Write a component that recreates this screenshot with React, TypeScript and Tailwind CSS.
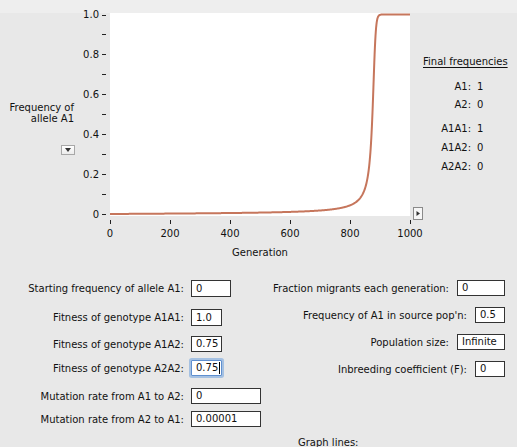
import React, { useMemo } from 'react';

// one-locus selection + mutation model, run for 1000 generations
const simulate = (w11: number, w12: number, w22: number, u: number, v: number, gens: number) => {
  let p = 0;
  const out: number[] = [];
  for (let g = 0; g <= gens; g++) {
    out.push(p);
    const q = 1 - p;
    const wbar = p * p * w11 + 2 * p * q * w12 + q * q * w22;
    let ps = (p * p * w11 + p * q * w12) / wbar;
    ps = ps + v * (1 - ps) - u * ps;
    p = ps;
  }
  return out;
};

const X = (g: number) => 32 + 0.3 * g;
const Y = (f: number) => 214 - 199.5 * f;

const Chart: React.FC = () => {
  const pts = useMemo(() => {
    const data = simulate(1, 0.75, 0.75, 0, 0.00001, 1000);
    return data.map((f, g) => `${X(g).toFixed(2)},${Y(f).toFixed(2)}`).join(' ');
  }, []);

  const yTicks = [0, 0.1, 0.2, 0.3, 0.4, 0.5, 0.6, 0.7, 0.8, 0.9, 1];
  const yLabels: Record<string, string> = { '0': '0', '0.2': '0.2', '0.4': '0.4', '0.6': '0.6', '0.8': '0.8', '1': '1.0' };
  const xTicks = [0, 200, 400, 600, 800, 1000];

  return (
    <svg width={345} height={262} className="shrink-0" fontFamily="'DejaVu Sans', sans-serif" fontSize={10}>
      <rect x={32} y={13} width={300} height={203} fill="#ffffff" />
      {yTicks.map(t => {
        const key = String(Math.round(t * 10) / 10);
        return (
          <g key={key}>
            <line x1={24} x2={28} y1={Math.round(Y(t)) + 0.5} y2={Math.round(Y(t)) + 0.5} stroke="#222" strokeWidth={1} />
            {yLabels[key] && (
              <text x={21} y={Y(t) + 3.5} textAnchor="end" fill="#111">{yLabels[key]}</text>
            )}
          </g>
        );
      })}
      {xTicks.map(t => (
        <g key={t}>
          <line x1={Math.round(X(t)) + 0.5} x2={Math.round(X(t)) + 0.5} y1={220} y2={224} stroke="#222" strokeWidth={1} />
          <text x={X(t)} y={236.5} textAnchor="middle" fill="#111">{t}</text>
        </g>
      ))}
      <text x={182} y={255.5} textAnchor="middle" fill="#111">Generation</text>
      <polyline points={pts} fill="none" stroke="#c6765c" strokeWidth={2} strokeLinejoin="round" />
      {/* scroll arrow */}
      <rect x={335.5} y={207.5} width={9} height={12} fill="#f6f6f6" stroke="#8a8a8a" />
      <path d="M338.5 211 L342 213.5 L338.5 216 Z" fill="#333" />
    </svg>
  );
};

const Field: React.FC<{ value: string; w: string; h?: string; focus?: boolean }> = ({ value, w, h = 'h-[16px]', focus }) => (
  <div
    className={`${w} ${h} shrink-0 bg-white flex items-center pl-[4px] text-[10px] leading-none text-[#111] ${
      focus
        ? 'border border-[#5f8fcf] shadow-[0_0_0_2px_rgba(110,160,220,0.55)] rounded-[1px]'
        : 'border border-[#333]'
    }`}
  >
    <span>{value}</span>
    {focus && <span className="w-px h-[12px] bg-black ml-[1px]" />}
  </div>
);

const LeftRow: React.FC<{ label: string; mt: string; children: React.ReactNode }> = ({ label, mt, children }) => (
  <div className={`flex items-center ${mt}`}>
    <div className="w-[184px] text-right pr-0 whitespace-nowrap">{label}</div>
    <div className="ml-[7px]">{children}</div>
  </div>
);

const RightRow: React.FC<{ label: string; children: React.ReactNode }> = ({ label, children }) => (
  <div className="flex items-center justify-end gap-[8px] h-[16px] whitespace-nowrap">
    <span>{label}</span>
    {children}
  </div>
);

export default function App() {
  return (
    <div className="w-[517px] h-[447px] overflow-hidden bg-[linear-gradient(#eeeeee_0,#eeeeee_13px,#e8e8e8_13px)] font-['DejaVu_Sans',sans-serif] text-[10px] text-[#111]">
      {/* plot section */}
      <div className="flex h-[262px]">
        <div className="w-[78px] shrink-0 flex flex-col pt-[102px]">
          <div className="text-right pr-[4px] leading-[11px]">
            Frequency of
            <br />
            allele A1
          </div>
          <div className="self-end mr-[3px] mt-[21px] w-[14px] h-[10px] border border-[#a8a8a8] bg-[linear-gradient(#ffffff,#ececec)] flex items-center justify-center">
            <svg width="6" height="4" viewBox="0 0 6 4">
              <path d="M0 0 L6 0 L3 4 Z" fill="#333" />
            </svg>
          </div>
        </div>
        <Chart />
        <div className="flex-1 pt-[56px]">
          <div className="leading-[12px] underline underline-offset-2 whitespace-nowrap">Final frequencies</div>
          <div className="grid grid-cols-[48px_1fr] gap-x-[6px] leading-[18px] mt-[10px]">
            <span className="text-right">A1:</span>
            <span>1</span>
            <span className="text-right">A2:</span>
            <span>0</span>
          </div>
          <div className="grid grid-cols-[48px_1fr] gap-x-[6px] leading-[19px] mt-[5px]">
            <span className="text-right">A1A1:</span>
            <span>1</span>
            <span className="text-right">A1A2:</span>
            <span>0</span>
            <span className="text-right">A2A2:</span>
            <span>0</span>
          </div>
        </div>
      </div>

      {/* parameter section */}
      <div className="flex">
        <div className="w-[262px] shrink-0 flex flex-col">
          <LeftRow label="Starting frequency of allele A1:" mt="mt-[18px]">
            <Field value="0" w="w-[40px]" h="h-[17px]" />
          </LeftRow>
          <LeftRow label="Fitness of genotype A1A1:" mt="mt-[12px]">
            <Field value="1.0" w="w-[31px]" h="h-[17px]" />
          </LeftRow>
          <LeftRow label="Fitness of genotype A1A2:" mt="mt-[10px]">
            <Field value="0.75" w="w-[31px]" />
          </LeftRow>
          <LeftRow label="Fitness of genotype A2A2:" mt="mt-[8px]">
            <Field value="0.75" w="w-[31px]" focus />
          </LeftRow>
          <LeftRow label="Mutation rate from A1 to A2:" mt="mt-[12px]">
            <Field value="0" w="w-[70px]" />
          </LeftRow>
          <LeftRow label="Mutation rate from A2 to A1:" mt="mt-[7px]">
            <Field value="0.00001" w="w-[70px]" />
          </LeftRow>
        </div>
        <div className="flex-1 flex flex-col pr-[12px] pt-[18px]">
          <div className="flex flex-col gap-[11px]">
            <RightRow label="Fraction migrants each generation:">
              <Field value="0" w="w-[48px]" />
            </RightRow>
            <RightRow label="Frequency of A1 in source pop'n:">
              <Field value="0.5" w="w-[30px]" />
            </RightRow>
            <RightRow label="Population size:">
              <Field value="Infinite" w="w-[48px]" />
            </RightRow>
            <RightRow label="Inbreeding coefficient (F):">
              <Field value="0" w="w-[30px]" />
            </RightRow>
          </div>
          <div className="ml-[36px] mt-[60px] leading-[12px]">Graph lines:</div>
        </div>
      </div>
    </div>
  );
}
